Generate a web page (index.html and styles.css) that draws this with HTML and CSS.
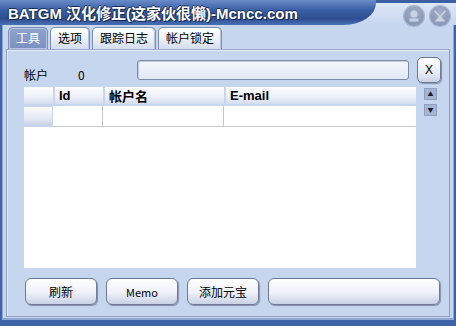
FILE: index.html
```html
<!DOCTYPE html>
<html lang="zh-CN">
<head>
    <meta charset="UTF-8">
    <title>BATGM</title>
    <link rel="stylesheet" href="styles.css">
</head>
<body>
    <div class="window">
        <div class="titlebar">
            <div class="title">BATGM 汉化修正(这家伙很懒)-Mcncc.com</div>
            <div class="controls">
                <span class="ctl">
                    <svg width="20" height="20" viewBox="0 0 20 20"><circle cx="10" cy="8" r="3.5" fill="#c9d2e4"/><rect x="5.5" y="12.5" width="9" height="3" fill="#c9d2e4"/></svg>
                </span>
                <span class="ctl">
                    <svg width="20" height="20" viewBox="0 0 20 20"><path d="M5 4 L10 9.5 L15 4 L16 5 L11 10.5 L15.5 15.5 L4.5 15.5 L9 10.5 L4 5 Z" fill="#c9d2e4"/></svg>
                </span>
            </div>
        </div>
        <div class="tabs">
            <div class="tab active">工具</div>
            <div class="tab">选项</div>
            <div class="tab">跟踪日志</div>
            <div class="tab">帐户锁定</div>
        </div>
        <div class="panel">
            <div class="account-row">
                <span class="lbl">帐户</span>
                <span class="count">0</span>
                <div class="field"></div>
                <button class="xbtn">X</button>
            </div>
            <div class="grid-row">
                <div class="grid">
                    <table>
                        <thead>
                            <tr>
                                <th class="c1"></th>
                                <th class="c2">Id</th>
                                <th class="c3">帐户名</th>
                                <th class="c4">E-mail</th>
                            </tr>
                        </thead>
                        <tbody>
                            <tr>
                                <td class="rowhead"></td>
                                <td></td>
                                <td></td>
                                <td></td>
                            </tr>
                        </tbody>
                    </table>
                </div>
                <div class="scroll">
                    <span class="arrow">▲</span>
                    <span class="arrow">▼</span>
                </div>
            </div>
            <div class="buttons">
                <button class="btn">刷新</button>
                <button class="btn small">Memo</button>
                <button class="btn">添加元宝</button>
                <button class="btn wide"></button>
            </div>
        </div>
    </div>
</body>
</html>
```
FILE: styles.css
```css
body {
    margin: 0;
    padding: 0;
    font-family: "Noto Sans CJK SC", "Liberation Sans", sans-serif;
    font-size: 12px;
    color: #000;
    background: #c6d6ef;
}
.window {
    width: 456px;
    height: 326px;
    box-sizing: border-box;
    display: flex;
    flex-direction: column;
    background: #c6d6ef;
    border-left: 2px solid #3d63a8;
    border-right: 2px solid #3d63a8;
    border-bottom: 6px solid #3d63a8;
    box-shadow: inset 1px 0 0 #8fa6d2, inset -1px 0 0 #8fa6d2, inset 0 -2px 0 #8fa6d2;
}
.titlebar {
    height: 25px;
    display: flex;
    background: linear-gradient(#3b5fa3 0, #3b5fa3 3px, #dde7f6 3px, #c6d6ef 100%);
    margin: 0 -2px;
}
.title {
    width: 376px;
    box-sizing: border-box;
    padding: 2px 0 0 8px;
    font-family: "Liberation Sans", "Noto Sans CJK SC", sans-serif;
    font-size: 15px;
    font-weight: bold;
    color: #fff;
    text-shadow: 1px 1px 0 #14264d, -1px 0 0 #1a2f5c, 0 -1px 0 #1a2f5c;
    background: linear-gradient(#6a8cc8, #3a5fa5 40%, #2d4f92 75%, #4a70b4);
    border-bottom-right-radius: 32px 22px;
    white-space: nowrap;
}
.controls {
    flex: 1;
    display: flex;
    justify-content: flex-end;
    gap: 6px;
    padding: 6px 6px 0 0;
}
.ctl {
    width: 20px;
    height: 20px;
    border-radius: 50%;
    background: radial-gradient(circle at 50% 35%, #a3afc8, #7f8dad);
    box-shadow: 0 0 0 1px #a5b3cf;
}
.tabs {
    display: flex;
    gap: 2px;
    padding: 2px 0 0 6px;
    height: 22px;
}
.tab {
    padding: 0 7px;
    line-height: 20px;
    border: 1px solid #7e8fb0;
    border-bottom: none;
    border-radius: 5px 5px 0 0;
    background: linear-gradient(#ffffff, #e7edf7 60%, #d3ddef);
    box-shadow: inset -1px 0 0 #b7c3da;
}
.tab.active {
    color: #fff;
    background: linear-gradient(#8ea4cf, #7a91c0);
    box-shadow: inset 0 0 0 1px #b5c4e3;
}
.panel {
    flex: 1;
    margin: 0 4px 3px 4px;
    border: 1px solid #8c9dbf;
    border-top: 1px solid #9aaacb;
    box-shadow: inset 1px 1px 0 #e3ebf7;
    padding: 7px 0 0 17px;
    display: flex;
    flex-direction: column;
}
.account-row {
    display: flex;
    align-items: center;
    height: 26px;
}
.lbl {
    width: 54px;
    padding-top: 8px;
}
.count {
    width: 59px;
    padding-top: 8px;
}
.field {
    width: 270px;
    height: 18px;
    border: 1px solid #7d8aa8;
    border-radius: 3px;
    background: linear-gradient(#f3f6fc, #e2e8f4);
    box-shadow: inset 1px 1px 0 #c4cde0;
}
.xbtn {
    margin-left: 8px;
    width: 24px;
    height: 26px;
    padding: 0;
    font-family: "Liberation Sans", sans-serif;
    font-size: 12px;
    border: 1px solid #6c7894;
    border-radius: 5px;
    background: linear-gradient(#ffffff, #e9edf6 60%, #c9d2e6);
    box-shadow: 1px 1px 1px #8592ad;
}
.grid-row {
    display: flex;
    margin-top: 4px;
}
.grid {
    width: 392px;
    height: 181px;
    background: #fff;
}
table {
    border-collapse: separate;
    border-spacing: 0;
    width: 392px;
}
th {
    height: 17px;
    padding: 0 0 0 4px;
    text-align: left;
    font-size: 13px;
    font-weight: bold;
    line-height: 17px;
    background: linear-gradient(#fdfdff, #eef1f9 55%, #d5dcee);
    border-left: 2px solid #c6d6ef;
    border-bottom: 2px solid #c6d6ef;
}
th.c1 {
    width: 25px;
    border-left: none;
}
th.c2 {
    width: 44px;
    font-family: "Liberation Sans", sans-serif;
}
th.c3 {
    width: 115px;
}
th.c4 {
    font-family: "Liberation Sans", sans-serif;
}
td {
    height: 19px;
    padding: 0;
    border-right: 1px solid #c8c8c8;
    border-bottom: 1px solid #c8c8c8;
}
td:last-child {
    border-right: none;
}
td.rowhead {
    background: linear-gradient(#fafbfe, #e3e8f4 60%, #c8d1e6);
    border: 1px solid #c6d6ef;
    border-left: none;
}
.scroll {
    margin-left: 8px;
    display: flex;
    flex-direction: column;
    gap: 4px;
    padding-top: 1px;
}
.arrow {
    width: 13px;
    height: 12px;
    font-size: 6px;
    line-height: 12px;
    text-align: center;
    color: #1a2030;
    background: #a6b5d4;
    box-shadow: inset 0 0 0 1px #8f9fc2;
}
.buttons {
    display: flex;
    gap: 9px;
    margin-top: 10px;
    padding-left: 1px;
}
.btn {
    width: 72px;
    height: 27px;
    padding: 0;
    font-family: "Noto Sans CJK SC", "Liberation Sans", sans-serif;
    font-size: 12px;
    border: 1px solid #6c7894;
    border-radius: 6px;
    background: linear-gradient(#ffffff, #eef1f8 55%, #c8d1e5);
    box-shadow: 1px 1px 1px #8592ad;
}
.btn.small {
    font-size: 11px;
}
.btn.wide {
    width: 172px;
}
```
